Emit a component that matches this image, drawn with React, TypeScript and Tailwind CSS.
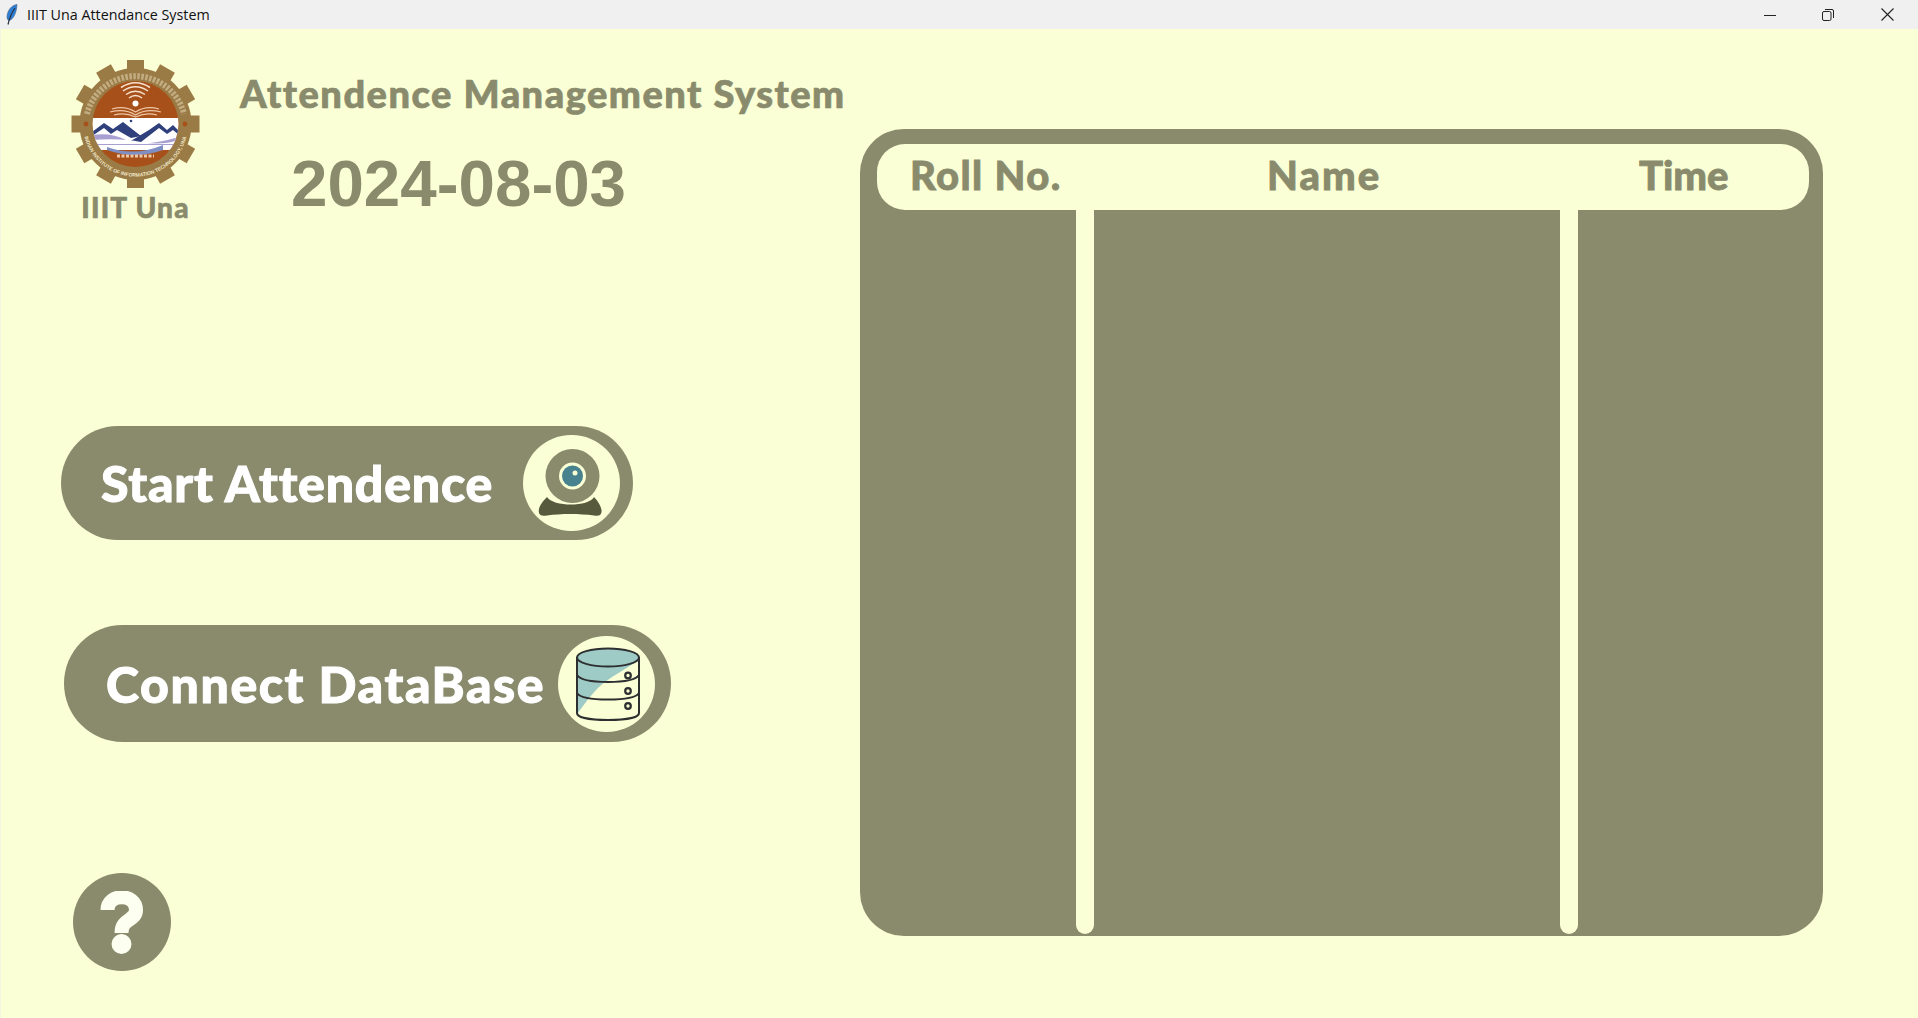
const teeth = [0, 30, 60, 90, 120, 150, 180, 210, 240, 270, 300, 330];

const Logo = () => (
    <svg width="129" height="128" viewBox="0 0 129 128" className="shrink-0">
        <defs>
            <clipPath id="inner"><circle cx="64.5" cy="64" r="43" /></clipPath>
            <path id="lowerArc" d="M 12.8 55 A 52.5 52.5 0 1 0 116.2 55" fill="none" />
        </defs>
        {teeth.map((t) => (
            <rect key={t} x="56" y="0" width="17" height="20" fill="#9b7b45" transform={`rotate(${t} 64.5 64)`} />
        ))}
        <circle cx="64.5" cy="64" r="56" fill="#9b7b45" />
        <path d="M 16 54 A 50 50 0 0 1 113 54" fill="none" stroke="#e9dfc0" strokeWidth="6" strokeDasharray="2.5 1.5" opacity="0.5" />
        <text fontFamily="Liberation Sans, sans-serif" fontSize="5" fontWeight="700" fill="#efe6c8">
            <textPath href="#lowerArc" startOffset="50%" textAnchor="middle">INDIAN INSTITUTE OF INFORMATION TECHNOLOGY, UNA</textPath>
        </text>
        <circle cx="15" cy="64" r="2.4" fill="#a8501a" />
        <circle cx="114" cy="64" r="2.4" fill="#a8501a" />
        <g clipPath="url(#inner)">
            <rect x="21" y="21" width="87" height="86" fill="#a8501a" />
            <rect x="21" y="58" width="87" height="27" fill="#ffffff" />
            <path d="M21 72 L33 63 L42 69 L52 62 L70 76 L60 78 L46 70 L40 74 L33 68 L21 76 Z" fill="#30407c" />
            <path d="M58 82 L78 70 L88 63 L96 70 L102 65 L108 71 L108 75 L102 70 L96 74 L88 68 L70 82 Z" fill="#30407c" />
            <path d="M21 75 Q40 72 55 80 T108 77 L108 88 L21 88 Z" fill="#a9a0d2" />
            <path d="M21 80 Q50 78 70 82 T108 80 L108 84 Q80 84 60 84 T21 84 Z" fill="#ffffff" />
            <path d="M21 85 L108 85 L108 90 L21 90 Z" fill="#ffffff" />
            <path d="M36 87 Q64 97 92 85 L92 90 Q64 100 36 90 Z" fill="#7f8fc4" />
            <circle cx="64.5" cy="43.5" r="3" fill="#ffffff" />
            <g fill="none" stroke="#f5e3d0" strokeWidth="1.5">
                <path d="M58 38 Q64.5 33 71 38" />
                <path d="M55 34.5 Q64.5 28 74 34.5" />
                <path d="M52 31 Q64.5 22.500 77 31" />
                <path d="M50 27.500 Q64.5 18 79 27.500" />
            </g>
            <g fill="none" stroke="#eec7a6" strokeWidth="1.2">
                <path d="M41 49 Q54 45 64.5 52 Q75 45 88 49" />
                <path d="M39 52 Q54 48 64.5 55 Q75 48 90 52" />
                <path d="M43 55 Q54 52 64.5 57 Q75 52 86 55" />
            </g>
            <path d="M46 96 L83 96" stroke="#eec7a6" strokeWidth="3" strokeDasharray="3 1.500" />
            <circle cx="60" cy="61" r="1.300" fill="#30407c" />
        </g>
    </svg>
);

const WebcamIcon = () => (
    <svg width="97" height="96" viewBox="0 0 97 96" className="block">
        <path d="M24 62 C17 69 15 74 16 78 C17 81 20 81 24 80.500 C38 78.500 56 78.500 71 80.500 C75 81 78 81 78.500 77 C79 73 76 67 71 62 C66 72 30 72 24 62 Z" fill="#585a3e" />
        <circle cx="49.500" cy="41" r="27" fill="#898b6c" />
        <circle cx="49.500" cy="41" r="13.500" fill="#faffd5" />
        <circle cx="49.500" cy="41" r="10.500" fill="#48828f" />
        <circle cx="52" cy="38" r="2.500" fill="#faffd5" />
    </svg>
);

const DatabaseIcon = () => (
    <svg width="97" height="96" viewBox="0 0 97 96" className="block">
        <path d="M19 21 L81 21 L81 24 C70 32 50 42 40 52 C30 62 24 72 19 78 Z" fill="#9ecbc6" />
        <g fill="none" stroke="#2d2f30" strokeWidth="2">
            <ellipse cx="50" cy="21.500" rx="31" ry="9" fill="#9ecbc6" />
            <path d="M19 21.500 L19 77 C19 81 30 84 50 84 C70 84 81 81 81 77 L81 21.500" />
            <path d="M19 39 C22 44 36 46 50 46 C64 46 78 44 81 39" />
            <path d="M19 57 C22 62 36 63.500 50 63.500 C64 63.500 78 62 81 57" />
            <circle cx="70" cy="39.500" r="2.800" strokeWidth="2.200" />
            <circle cx="70" cy="55" r="2.800" strokeWidth="2.200" />
            <circle cx="70" cy="70" r="2.800" strokeWidth="2.200" />
        </g>
    </svg>
);

const App = () => {
    return (
        <div className="flex flex-col w-[1918px] h-[1018px] overflow-hidden bg-[#faffd5]">
            {/* Title bar */}
            <div className="flex items-center h-[29px] shrink-0 bg-[#f0f0f0]">
                <svg width="12" height="21" viewBox="0 0 12 21" className="ml-[6px] shrink-0">
                    <path d="M11 .5 C6 1 1.500 6 1 12.500 C1 14.500 1.500 16 3 16.500 C8 15 10.500 8 11 .5 Z" fill="#2f7fd6" stroke="#3c5a80" strokeWidth=".6" />
                    <path d="M9 4 C6 8 3.500 14 2 20.500" fill="none" stroke="#26303c" strokeWidth="1.200" />
                </svg>
                <span className="ml-[9px] text-[14.3px] text-[#111] font-['Open_Sans',sans-serif]">IIIT Una Attendance System</span>
                <div className="ml-auto flex items-center text-[#222]">
                    <svg width="12" height="12" viewBox="0 0 12 12" className="mr-[46px]"><path d="M0 6.500 H12" stroke="currentColor" /></svg>
                    <svg width="12" height="12" viewBox="0 0 12 12" className="mr-[47px]">
                        <rect x="0.500" y="2.500" width="8.500" height="9" rx="1.500" fill="none" stroke="currentColor" />
                        <path d="M3 .5 H10 Q11.500 .5 11.500 2 V9" fill="none" stroke="currentColor" />
                    </svg>
                    <svg width="13" height="13" viewBox="0 0 13 13" className="mr-[24px]"><path d="M.5 .5 L12.500 12.500 M12.500 .5 L.5 12.500" stroke="currentColor" strokeWidth="1.100" /></svg>
                </div>
            </div>

            <div className="flex flex-1 border-l border-[#f3f5e0] font-['Lato',sans-serif]">
                {/* Left column */}
                <div className="w-[859px] shrink-0 flex flex-col">
                    <div className="h-[397px] flex pl-[70px] pt-[31px]">
                        <div className="flex flex-col items-center w-[129px]">
                            <Logo />
                            <span className="mt-[2px] text-[28px] leading-[34px] font-black tracking-[1.2px] text-[#898b6c] [-webkit-text-stroke:0.6px_#898b6c]">IIIT Una</span>
                        </div>
                        <div className="ml-[40px] flex flex-col">
                            <h1 className="mt-[10px] text-[38px] leading-[46px] font-black tracking-[1.5px] text-[#898b6c] whitespace-nowrap [-webkit-text-stroke:0.7px_#898b6c]">Attendence Management System</h1>
                            <p className="mt-[32px] ml-[51px] text-[65.5px] leading-[72px] font-bold text-[#898b6c] font-['Liberation_Sans',sans-serif]">2024-08-03</p>
                        </div>
                    </div>

                    <button className="ml-[60px] w-[572px] h-[114px] shrink-0 flex items-center rounded-full bg-[#898b6c] pl-[40px] pr-[13px]">
                        <span className="text-[50px] leading-none font-black tracking-[0.8px] text-white whitespace-nowrap [-webkit-text-stroke:1px_white]">Start Attendence</span>
                        <span className="ml-auto w-[97px] h-[96px] rounded-full bg-[#faffd5]"><WebcamIcon /></span>
                    </button>

                    <button className="mt-[85px] ml-[63px] w-[607px] h-[117px] shrink-0 flex items-center rounded-full bg-[#898b6c] pl-[42px] pr-[16px]">
                        <span className="text-[50px] leading-none font-black tracking-[1.6px] text-white whitespace-nowrap [-webkit-text-stroke:1px_white]">Connect DataBase</span>
                        <span className="ml-auto w-[97px] h-[96px] rounded-full bg-[#faffd5]"><DatabaseIcon /></span>
                    </button>

                    <button className="mt-[131px] ml-[72px] w-[98px] h-[98px] shrink-0 rounded-full bg-[#898b6c] flex items-center justify-center">
                        <svg width="44" height="63" viewBox="0 0 44 63">
                            <path d="M7.500 19 C7.500 2 36 2 36 19 C36 30 21.500 27 21.500 42" fill="none" stroke="#fdfff0" strokeWidth="14" />
                            <circle cx="21.500" cy="53" r="10" fill="#fdfff0" />
                        </svg>
                    </button>
                </div>

                {/* Attendance table */}
                <div className="mt-[100px] w-[963px] h-[807px] shrink-0 flex flex-col rounded-[44px] bg-[#898b6c] overflow-hidden">
                    <div className="mt-[15px] ml-[17px] mr-[14px] h-[66px] shrink-0 flex items-center rounded-[28px] bg-[#faffd5] pl-[33px] pb-[5px] text-[40px] font-black tracking-[1px] text-[#898b6c] [-webkit-text-stroke:0.8px_#898b6c]">
                        <span className="w-[357px] tracking-[1.4px]">Roll No.</span>
                        <span className="w-[372px] tracking-[2px]">Name</span>
                        <span className="tracking-[0px]">Time</span>
                    </div>
                    <div className="flex flex-1 pb-[2px]">
                        <div className="ml-[216px] w-[18px] rounded-b-full bg-[#faffd5]" />
                        <div className="ml-[466px] w-[18px] rounded-b-full bg-[#faffd5]" />
                    </div>
                </div>
            </div>
        </div>
    );
};

export default App;
